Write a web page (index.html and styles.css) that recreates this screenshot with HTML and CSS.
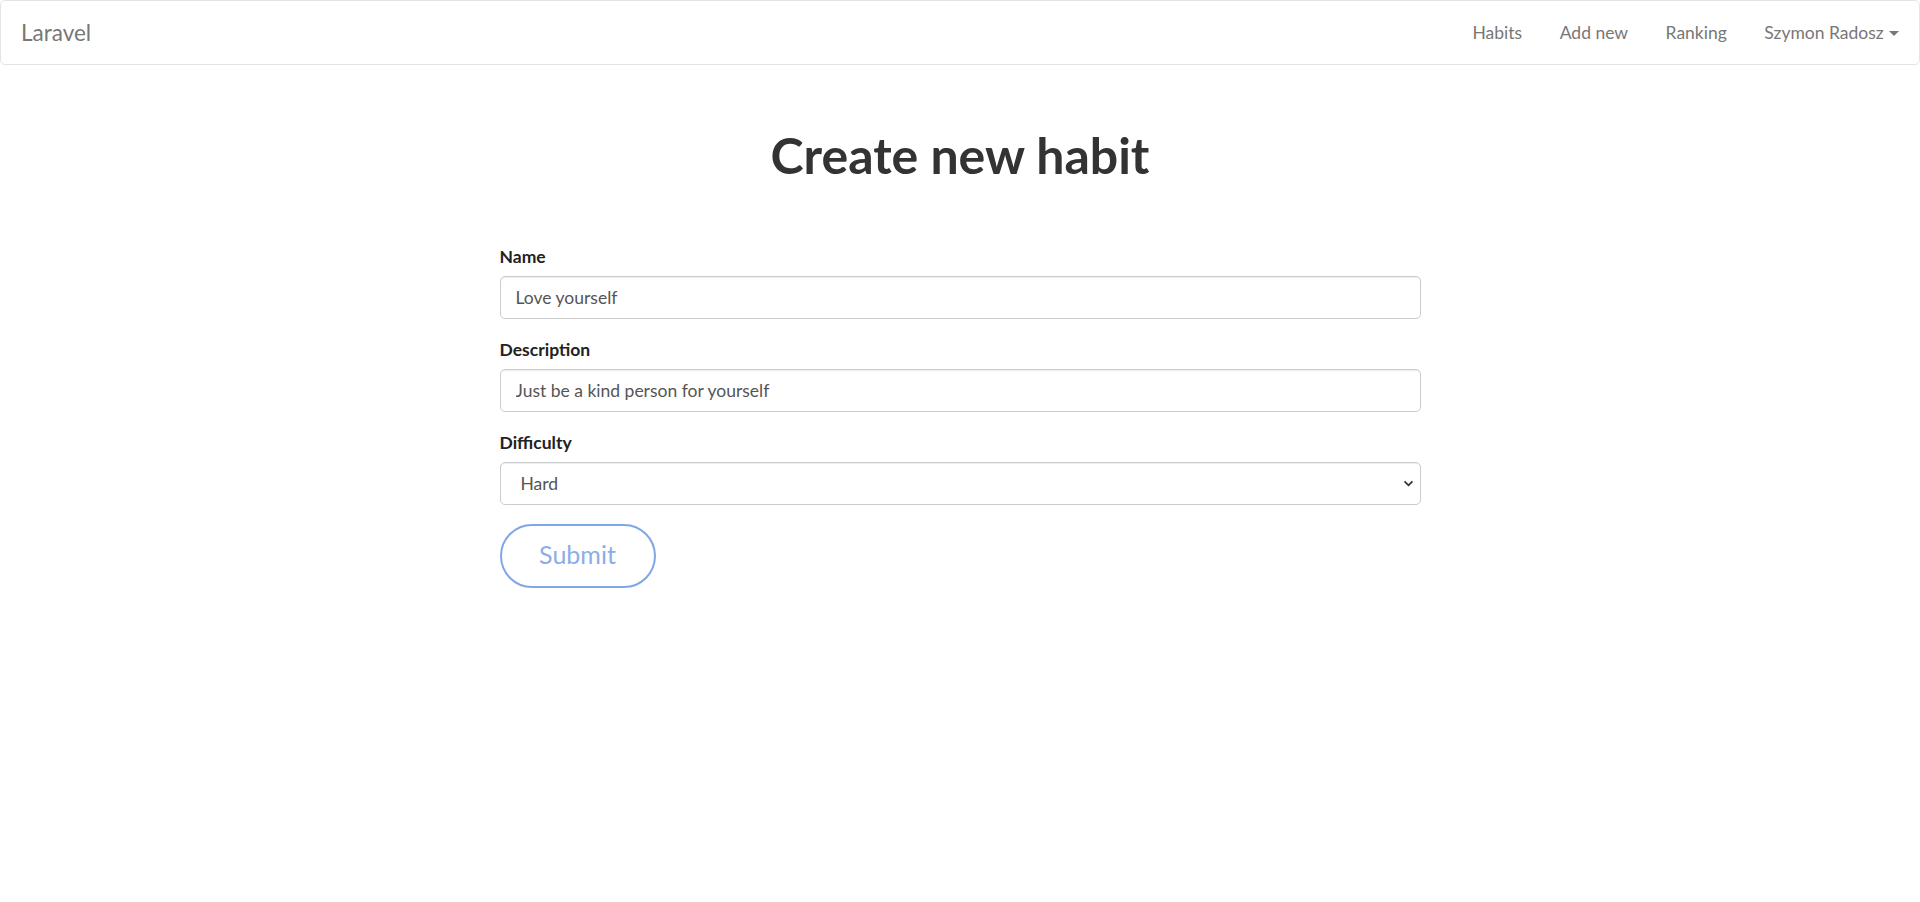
FILE: index.html
```html
<!DOCTYPE html>
<html lang="en">
<head>
<meta charset="utf-8">
<title>Laravel</title>
<link rel="stylesheet" href="styles.css">
</head>
<body>
<nav class="navbar">
  <a class="brand" href="#">Laravel</a>
  <ul class="nav">
    <li><a href="#">Habits</a></li>
    <li><a href="#">Add new</a></li>
    <li><a href="#">Ranking</a></li>
    <li><a href="#">Szymon Radosz <span class="caret"></span></a></li>
  </ul>
</nav>
<main class="content">
  <h1 class="title">Create new habit</h1>
  <form class="form">
    <div class="group">
      <label class="label" for="name">Name</label>
      <input class="control" id="name" type="text" value="Love yourself">
    </div>
    <div class="group">
      <label class="label" for="desc">Description</label>
      <input class="control" id="desc" type="text" value="Just be a kind person for yourself">
    </div>
    <div class="group">
      <label class="label" for="diff">Difficulty</label>
      <select class="control select" id="diff">
        <option>Easy</option>
        <option>Medium</option>
        <option selected>Hard</option>
      </select>
    </div>
    <button class="submit" type="button">Submit</button>
  </form>
</main>
</body>
</html>
```

FILE: styles.css
```css
* { box-sizing: border-box; }
html, body { margin: 0; padding: 0; background: #fff; }
body {
  font-family: Lato, "Open Sans", sans-serif;
  font-size: 17.5px;
  line-height: 1.6;
  color: #636b6f;
}
a { text-decoration: none; }

.navbar {
  height: 65px;
  border: 1px solid #e4e4e4;
  border-radius: 5px;
  background: #fff;
  display: flex;
  align-items: center;
  justify-content: space-between;
  padding: 0 1px 0 20px;
}
.brand {
  font-size: 22.5px;
  color: #777;
  line-height: 1;
  padding-top: 1px;
}
.nav {
  list-style: none;
  margin: 0;
  padding: 0;
  display: flex;
}
.nav a {
  display: block;
  padding: 0 18.75px;
  font-size: 17.5px;
  color: #777;
  line-height: 28px;
}
.caret {
  display: inline-block;
  width: 0;
  height: 0;
  margin-left: 1px;
  vertical-align: middle;
  border-top: 5px solid #777;
  border-left: 5px solid transparent;
  border-right: 5px solid transparent;
  position: relative;
  top: -1px;
}

.content {
  padding-top: 63px;
  display: flex;
  flex-direction: column;
  align-items: center;
}
.title {
  margin: 0;
  font-size: 50px;
  font-weight: 700;
  line-height: 55px;
  color: #333;
}
.form {
  width: 921px;
  margin-top: 59.5px;
  display: flex;
  flex-direction: column;
  align-items: flex-start;
}
.group {
  width: 100%;
  margin-bottom: 17px;
  display: flex;
  flex-direction: column;
}
.label {
  font-weight: 700;
  color: #222;
  font-size: 17.5px;
  line-height: 28px;
  margin-bottom: 5.5px;
}
.control {
  width: 100%;
  height: 42.5px;
  padding: 0 15px;
  font-family: Lato, "Open Sans", sans-serif;
  font-size: 17.5px;
  color: #555;
  background: #fff;
  border: 1px solid #ccc;
  border-radius: 5px;
  box-shadow: inset 0 1px 1px rgba(0,0,0,.075);
  outline: none;
}
.select {
  -webkit-appearance: none;
  appearance: none;
  padding-left: 20px;
  background-image: url("data:image/svg+xml,%3Csvg xmlns='http://www.w3.org/2000/svg' width='12' height='8' viewBox='0 0 12 8'%3E%3Cpath d='M1.5 1.5 L6 6 L10.5 1.5' fill='none' stroke='%23333' stroke-width='2'/%3E%3C/svg%3E");
  background-repeat: no-repeat;
  background-position: right 6px center;
  background-size: 11px 7px;
}
.submit {
  margin-top: 2px;
  width: 156px;
  height: 64px;
  border: 2px solid #7fa6e6;
  border-radius: 32px;
  background: #fff;
  color: #8aaee8;
  font-family: Lato, "Open Sans", sans-serif;
  font-size: 25px;
  padding: 0 0 4px 0;
  cursor: pointer;
}
```
